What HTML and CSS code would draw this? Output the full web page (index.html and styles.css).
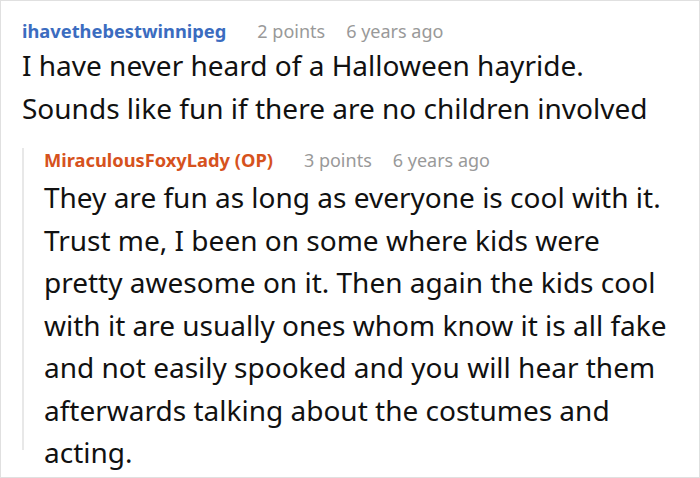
FILE: index.html
```html
<!DOCTYPE html>
<html>
<head>
<meta charset="utf-8">
<link rel="stylesheet" href="styles.css">
</head>
<body>
<div class="card">
  <div class="comment">
    <div class="meta">
      <span class="user">ihavethebestwinnipeg</span>
      <span class="info">2 points</span>
      <span class="info">6 years ago</span>
    </div>
    <p class="text">I have never heard of a Halloween hayride. Sounds like fun if there are no children involved</p>
  </div>
  <div class="reply">
    <div class="meta">
      <span class="user op">MiraculousFoxyLady (OP)</span>
      <span class="info">3 points</span>
      <span class="info">6 years ago</span>
    </div>
    <p class="text">They are fun as long as everyone is cool with it. Trust me, I been on some where kids were pretty awesome on it. Then again the kids cool with it are usually ones whom know it is all fake and not easily spooked and you will hear them afterwards talking about the costumes and acting.</p>
  </div>
</div>
</body>
</html>
```
FILE: styles.css
```css
html, body {
  margin: 0;
  padding: 0;
  background: #fff;
}
.card {
  width: 700px;
  height: 478px;
  box-sizing: border-box;
  border: 1px solid #e0e0e0;
  padding: 18px 28px 0 21px;
  font-family: "Noto Sans", sans-serif;
  color: #111;
}
.meta {
  display: flex;
  align-items: baseline;
  font-size: 18px;
  line-height: 24px;
  white-space: nowrap;
}
.user {
  font-size: 18.3px;
  font-weight: bold;
  color: #3b6cc0;
  margin-right: 31px;
}
.user.op {
  color: #d6521d;
}
.info {
  color: #999;
  margin-right: 21px;
}
.text {
  margin: 1px 0 0;
  font-size: 28px;
  line-height: 42.5px;
}
.reply {
  margin-top: 29px;
  border-left: 2px solid #e8e8e8;
  padding-left: 20px;
  height: 302px;
}
.reply .meta {
  margin-top: -10px;
}
.reply .text {
  margin-top: 4px;
}
```
